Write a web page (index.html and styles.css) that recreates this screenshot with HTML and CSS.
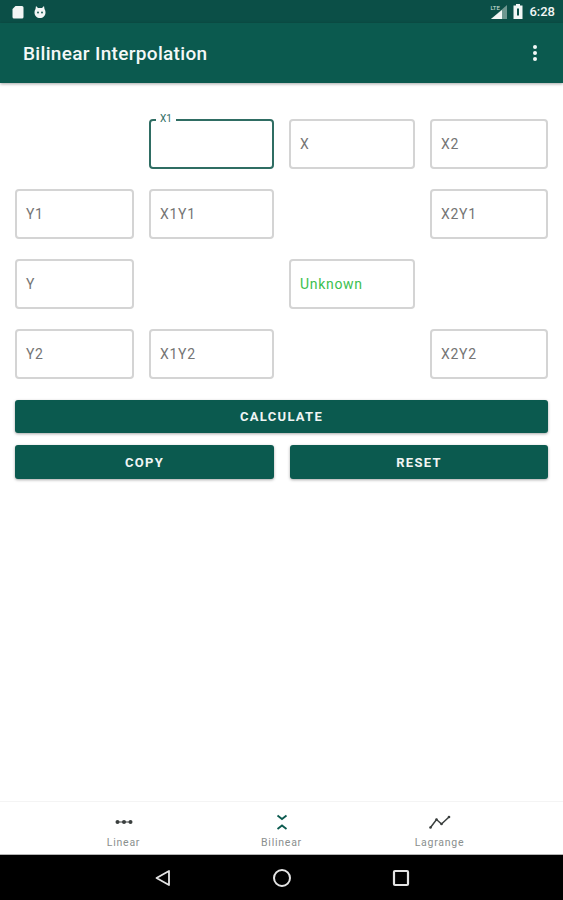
FILE: index.html
```html
<!DOCTYPE html>
<html lang="en">
  <head>
    <meta charset="UTF-8" />
    <meta name="viewport" content="width=device-width, initial-scale=1.0" />
    <title>Bilinear Interpolation</title>
    <link rel="stylesheet" href="styles.css">
  </head>
  <body>
    <div class="screen">
      <div class="status-bar">
        <div class="status-left">
          <svg width="14" height="14" viewBox="0 0 14 14"><path d="M4.5 1H11a1.5 1.5 0 0 1 1.500 1.500v9.500A1.500 1.500 0 0 1 11 13.500H3A1.500 1.500 0 0 1 1.500 12V4z" fill="#f2f6f5"/></svg>
          <svg width="14" height="14" viewBox="0 0 14 14"><path d="M3 1l2 2h4l2-2 .5 3a5.500 5.500 0 0 1 1 3.500C12.500 11 10 13 7 13s-5.500-2-5.500-5.500a5.500 5.500 0 0 1 1-3.500z" fill="#f2f6f5"/><circle cx="5" cy="7.500" r=".9" fill="#0b4f47"/><circle cx="9" cy="7.500" r=".9" fill="#0b4f47"/></svg>
        </div>
        <div class="status-right">
          <div class="signal">
            <span class="lte">LTE</span>
            <svg width="16" height="14" viewBox="0 0 16 14"><path d="M16 0v14H0z" fill="#6f9790"/><path d="M11 5v9H0z" fill="#f2f6f5"/></svg>
          </div>
          <svg width="10" height="15" viewBox="0 0 10 15"><path d="M3 0h4v1.500h2.500V15H.500V1.500H3z" fill="#f2f6f5"/><path d="M5 4.500v7" stroke="#0b4f47" stroke-width="2"/></svg>
          <span class="clock">6:28</span>
        </div>
      </div>

      <header class="app-bar">
        <h1>Bilinear Interpolation</h1>
        <div class="menu-dots"><i></i><i></i><i></i></div>
      </header>

      <main class="content">
        <div class="field-grid">
          <div class="field field-focus col-2"><span class="float-label">X1</span></div>
          <div class="field">X</div>
          <div class="field">X2</div>

          <div class="field">Y1</div>
          <div class="field">X1Y1</div>
          <div class="field col-4">X2Y1</div>

          <div class="field">Y</div>
          <div class="field field-result col-3">Unknown</div>

          <div class="field row-start">Y2</div>
          <div class="field">X1Y2</div>
          <div class="field col-4">X2Y2</div>
        </div>

        <button class="btn btn-wide">CALCULATE</button>
        <div class="btn-row">
          <button class="btn btn-copy">COPY</button>
          <button class="btn btn-reset">RESET</button>
        </div>
      </main>

      <nav class="bottom-nav">
        <div class="tab">
          <svg width="22" height="16" viewBox="0 0 22 16"><path d="M3 8h16" stroke="#3a3f3e" stroke-width="1"/><circle cx="4.500" cy="8" r="2" fill="#3a3f3e"/><circle cx="11" cy="8" r="2" fill="#3a3f3e"/><circle cx="17.500" cy="8" r="2" fill="#3a3f3e"/></svg>
          <span>Linear</span>
        </div>
        <div class="tab">
          <svg width="22" height="16" viewBox="0 0 22 16"><path d="M6.500 1.500L11 5l4.500-3.500M6.500 15L11 11.500l4.500 3.500" fill="none" stroke="#0b5a4f" stroke-width="1.800"/></svg>
          <span>Bilinear</span>
        </div>
        <div class="tab">
          <svg width="22" height="16" viewBox="0 0 22 16"><path d="M1.500 13.500L7.500 5.500l5 4.500 7.500-7" fill="none" stroke="#3a3f3e" stroke-width="1.500"/><circle cx="1.500" cy="13.500" r="1.300" fill="#3a3f3e"/><circle cx="7.500" cy="5.500" r="1.300" fill="#3a3f3e"/><circle cx="12.500" cy="10" r="1.300" fill="#3a3f3e"/><circle cx="20" cy="3" r="1.300" fill="#3a3f3e"/></svg>
          <span>Lagrange</span>
        </div>
      </nav>

      <div class="nav-bar">
        <svg width="18" height="18" viewBox="0 0 18 18"><path d="M15 2v14L2.500 9z" fill="none" stroke="#e4e4e4" stroke-width="1.800" stroke-linejoin="round"/></svg>
        <svg width="20" height="20" viewBox="0 0 20 20"><circle cx="10" cy="10" r="8" fill="none" stroke="#e4e4e4" stroke-width="2"/></svg>
        <svg width="18" height="18" viewBox="0 0 18 18"><rect x="2" y="2" width="14" height="14" rx="1" fill="none" stroke="#e4e4e4" stroke-width="2.200"/></svg>
      </div>
    </div>
  </body>
</html>
```

FILE: styles.css
```css
* {
  margin: 0;
  padding: 0;
  box-sizing: border-box;
}

body {
  font-family: "Roboto", "Liberation Sans", sans-serif;
  background-color: #ffffff;
}

.screen {
  width: 563px;
  height: 900px;
  display: flex;
  flex-direction: column;
  overflow: hidden;
}

.status-bar {
  height: 23px;
  background-color: #0b4f47;
  display: flex;
  justify-content: space-between;
  align-items: center;
  padding: 0 8px 0 11px;
  flex-shrink: 0;
}

.status-left {
  display: flex;
  gap: 8px;
}

.status-right {
  display: flex;
  align-items: center;
  gap: 6px;
}

.signal {
  position: relative;
  display: flex;
}

.lte {
  position: absolute;
  top: -1px;
  left: -1px;
  font-size: 6px;
  line-height: 7px;
  color: #d5e2df;
}

.clock {
  color: #f2f6f5;
  font-size: 13px;
  font-weight: 500;
}

.app-bar {
  height: 60px;
  background-color: #0b5a4f;
  box-shadow: 0 1px 3px rgba(0, 0, 0, 0.35);
  display: flex;
  justify-content: space-between;
  align-items: center;
  padding: 0 26px 0 23px;
  flex-shrink: 0;
  position: relative;
}

.app-bar h1 {
  color: #f4f8f7;
  font-size: 19px;
  font-weight: 500;
  letter-spacing: 0.33px;
}

.menu-dots {
  display: flex;
  flex-direction: column;
  gap: 2px;
}

.menu-dots i {
  width: 4px;
  height: 4px;
  border-radius: 50%;
  background-color: #f4f8f7;
}

.content {
  flex: 1;
  padding: 36px 15px 0;
}

.field-grid {
  display: grid;
  grid-template-columns: 119px 125px 126px 118px;
  grid-auto-rows: 50px;
  column-gap: 15px;
  row-gap: 20px;
}

.field {
  border: 2px solid #d4d4d4;
  border-radius: 4px;
  display: flex;
  align-items: center;
  padding-left: 9px;
  font-size: 14px;
  letter-spacing: 0.7px;
  color: #757575;
  position: relative;
}

.field-focus {
  border-color: #2f6d63;
}

.float-label {
  position: absolute;
  top: -8px;
  left: 5px;
  padding: 0 4px;
  background-color: #ffffff;
  font-size: 10px;
  line-height: 12px;
  letter-spacing: 0;
  color: #2f6d63;
}

.field-result {
  color: #3cc04e;
}

.col-2 {
  grid-column: 2;
}

.col-3 {
  grid-column: 3;
}

.col-4 {
  grid-column: 4;
}

.row-start {
  grid-column: 1;
}

.btn {
  height: 33px;
  border: none;
  border-radius: 3px;
  background-color: #0b5a4f;
  color: #f0f5f4;
  font-family: inherit;
  font-size: 13px;
  font-weight: 700;
  letter-spacing: 1.3px;
  box-shadow: 0 1px 3px rgba(0, 0, 0, 0.35);
}

.btn-wide {
  display: block;
  width: 533px;
  margin-top: 21px;
}

.btn-row {
  display: flex;
  margin-top: 12px;
  gap: 16px;
}

.btn-copy {
  width: 259px;
  height: 34px;
}

.btn-reset {
  width: 258px;
  height: 34px;
}

.bottom-nav {
  height: 54px;
  border-top: 1px solid #f4f4f4;
  border-bottom: 1px solid #b5b5b5;
  display: flex;
  justify-content: center;
  flex-shrink: 0;
}

.tab {
  width: 158px;
  padding-top: 12px;
  display: flex;
  flex-direction: column;
  align-items: center;
  gap: 6px;
  font-size: 10.500px;
  letter-spacing: 0.75px;
  color: #8a8f8e;
}

.nav-bar {
  height: 45px;
  background-color: #000000;
  display: flex;
  justify-content: center;
  gap: 100px;
  align-items: center;
  flex-shrink: 0;
}
```
